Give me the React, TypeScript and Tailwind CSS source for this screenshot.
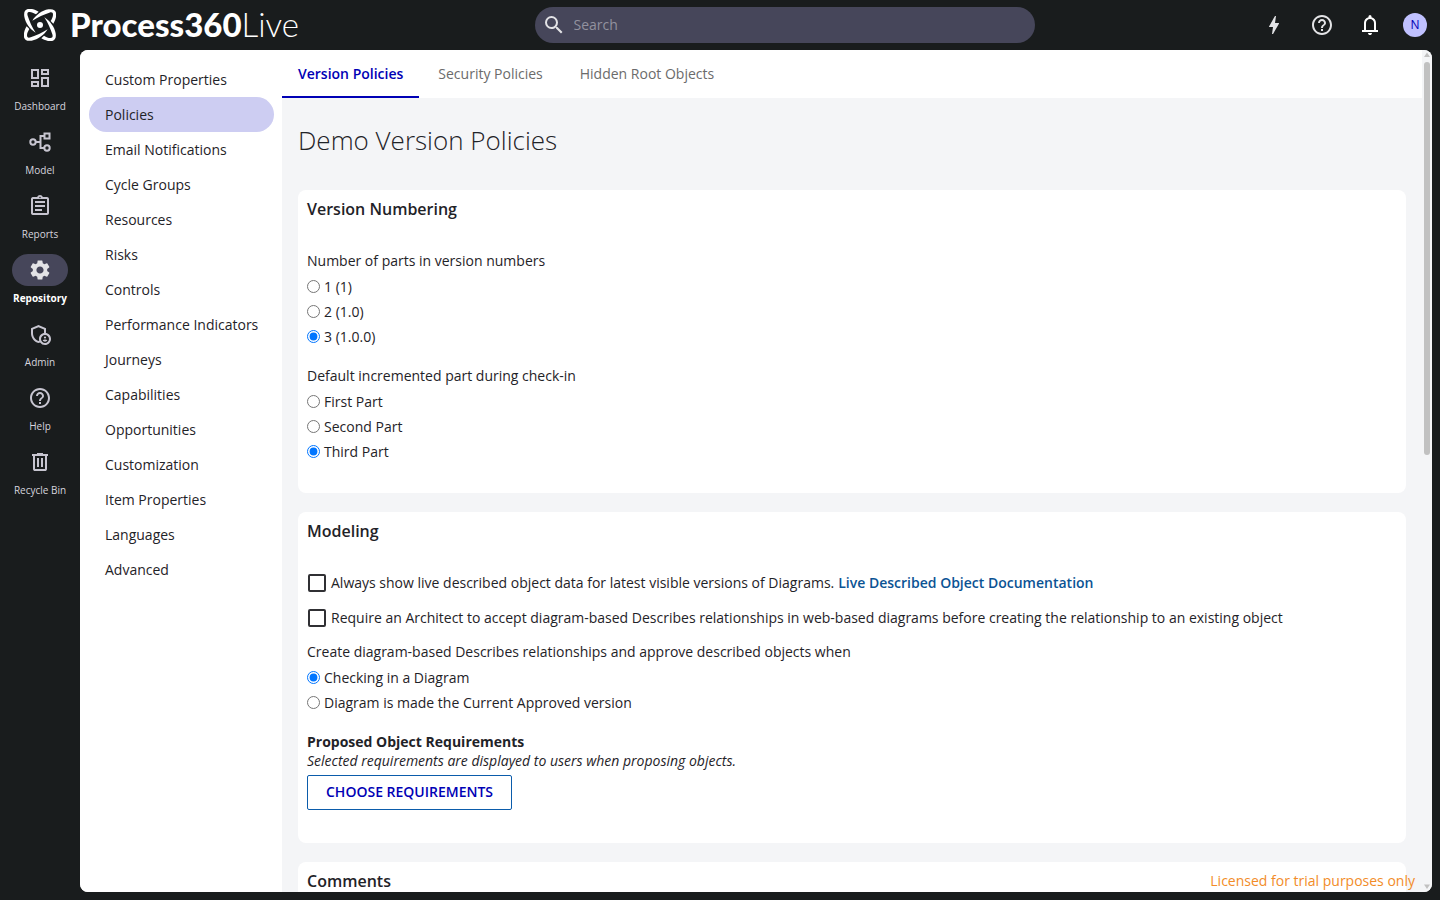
import { useState } from "react";
import type { ReactNode } from "react";
import {
  MdBolt,
  MdHelpOutline,
  MdOutlineAdminPanelSettings,
  MdOutlineAssignment,
  MdOutlineDashboard,
  MdSearch,
  MdSettings,
} from "react-icons/md";

const orbitArm =
  "M25 35C35 19 54 4 73 1C91 -2 99 6 96 24C94 33 91 39 88 44L80 36C84 29 87 23 87 17C87 10 83 9 76 11C60 16 42 24 25 35Z";

function LogoMark() {
  return (
    <svg viewBox="0 0 96 96" className="size-8" fill="#fff" aria-hidden="true">
      <path d={orbitArm} />
      <path d={orbitArm} transform="rotate(90 48 48)" />
      <path d={orbitArm} transform="rotate(180 48 48)" />
      <path d={orbitArm} transform="rotate(270 48 48)" />
      <circle cx="48" cy="48" r="9" />
    </svg>
  );
}

function ModelIcon() {
  return (
    <svg viewBox="0 0 24 24" className="size-6" fill="none" stroke="currentColor" strokeWidth="2" aria-hidden="true">
      <circle cx="5" cy="12" r="2.7" />
      <path d="M8 12h4M17 6h-4.500v12H16" />
      <rect x="16.500" y="3.500" width="5" height="5" />
      <circle cx="19" cy="18" r="2.700" />
    </svg>
  );
}

function TrashIcon() {
  return (
    <svg viewBox="0 -960 960 960" className="size-6" fill="currentColor" aria-hidden="true">
      <path d="M280-120q-33 0-56.500-23.500T200-200v-520h-40v-80h200v-40h240v40h200v80h-40v520q0 33-23.500 56.500T680-120H280Zm400-600H280v520h400v-520ZM360-280h80v-360h-80v360Zm160 0h80v-360h-80v360Z" />
    </svg>
  );
}

function BellIcon() {
  return (
    <svg viewBox="0 -960 960 960" className="size-6" fill="currentColor" aria-hidden="true">
      <path d="M160-200v-80h80v-280q0-83 50-147.500T420-792v-28q0-25 17.500-42.500T480-880q25 0 42.500 17.500T540-820v28q80 20 130 84.500T720-560v280h80v80H160Zm320 120q-33 0-56.500-23.500T400-160h160q0 33-23.500 56.500T480-80ZM320-280h320v-280q0-66-47-113t-113-47q-66 0-113 47t-47 113v280Z" />
    </svg>
  );
}

const railItems: { label: string; icon: ReactNode }[] = [
  { label: "Dashboard", icon: <MdOutlineDashboard className="size-6" /> },
  { label: "Model", icon: <ModelIcon /> },
  { label: "Reports", icon: <MdOutlineAssignment className="size-6" /> },
  { label: "Repository", icon: <MdSettings className="size-6" /> },
  { label: "Admin", icon: <MdOutlineAdminPanelSettings className="size-6" /> },
  { label: "Help", icon: <MdHelpOutline className="size-6" /> },
  { label: "Recycle Bin", icon: <TrashIcon /> },
];

const menuItems = [
  "Custom Properties",
  "Policies",
  "Email Notifications",
  "Cycle Groups",
  "Resources",
  "Risks",
  "Controls",
  "Performance Indicators",
  "Journeys",
  "Capabilities",
  "Opportunities",
  "Customization",
  "Item Properties",
  "Languages",
  "Advanced",
];

const tabs = ["Version Policies", "Security Policies", "Hidden Root Objects"];

function Header() {
  return (
    <header className="flex h-[50px] shrink-0 items-center">
      <a href="#home" className="flex grow basis-[142px] items-center gap-[14px] pl-6 text-white">
        <LogoMark />
        <span className="pb-[2px] font-['Lato',sans-serif] text-[33px] leading-8 font-black">
          Process360<span className="font-light">Live</span>
        </span>
      </a>
      <label className="flex h-9 w-[500px] items-center gap-2 rounded-full bg-[#46465a] pl-[7px]">
        <MdSearch className="size-6 text-[#e3e3e6]" />
        <input
          type="search"
          aria-label="Search"
          placeholder="Search"
          className="flex-1 bg-transparent text-sm text-white outline-none placeholder:text-[#92929f]"
        />
      </label>
      <div className="flex grow basis-0 items-center justify-end gap-6 pr-[13px] text-[#e3e3e6]">
        <button aria-label="Quick actions"><MdBolt className="size-6" /></button>
        <button aria-label="Help"><MdHelpOutline className="size-6" /></button>
        <div className="flex items-center gap-[21px]">
          <button aria-label="Notifications" className="text-white"><BellIcon /></button>
          <button aria-label="Account" className="size-6 rounded-full bg-[#c0c1ff] text-xs text-[#0000b5]">N</button>
        </div>
      </div>
    </header>
  );
}

function Rail() {
  return (
    <nav aria-label="Main" className="flex w-20 shrink-0 flex-col pt-3">
      {railItems.map(({ label, icon }) => {
        const active = label === "Repository";
        return (
          <a
            key={label}
            href="#section"
            className={`flex h-16 flex-col items-center gap-1 text-[10px] leading-4 ${active ? "font-bold text-white" : "font-medium text-[#d6d4de]"}`}
          >
            <span className={`flex h-8 w-14 items-center justify-center rounded-full ${active ? "bg-[#46465a] text-[#e3e3e6]" : "text-[#c7c5d0]"}`}>
              {icon}
            </span>
            {label}
          </a>
        );
      })}
    </nav>
  );
}

function SideMenu() {
  return (
    <nav aria-label="Repository" className="flex w-[202px] shrink-0 flex-col bg-white pt-3 pr-2 pl-[9px]">
      {menuItems.map((item) => (
        <a
          key={item}
          href="#item"
          className={`flex h-[35px] shrink-0 items-center rounded-full pl-4 whitespace-nowrap ${item === "Policies" ? "bg-[#cdcdf2]" : ""}`}
        >
          {item}
        </a>
      ))}
    </nav>
  );
}

function Card({ title, children }: { title: string; children?: ReactNode }) {
  return (
    <section className="rounded-lg bg-white px-[9px] pt-[9px] pb-[26px]">
      <h2 className="text-base leading-5 font-semibold">{title}</h2>
      {children}
    </section>
  );
}

function RadioGroup({ name, legend, options, initial }: { name: string; legend: string; options: string[]; initial: number }) {
  const [value, setValue] = useState(initial);
  return (
    <fieldset>
      <legend className="h-[26px] leading-5">{legend}</legend>
      {options.map((option, index) => (
        <label key={option} className="flex h-[25px] w-fit items-start gap-1 leading-5">
          <input
            type="radio"
            name={name}
            checked={value === index}
            onChange={() => setValue(index)}
            className="mt-[3px] size-[13px] accent-[#0075ff]"
          />
          {option}
        </label>
      ))}
    </fieldset>
  );
}

function CheckRow({ id, label, children }: { id: string; label: string; children?: ReactNode }) {
  return (
    <div className="flex h-[35px] items-center whitespace-nowrap">
      <input id={id} type="checkbox" className="mr-[5px] ml-px size-[18px] shrink-0 appearance-none rounded-xs border-2 border-[#303034] checked:bg-[#0000b5]" />
      <label htmlFor={id}>{label}</label>
      {children}
    </div>
  );
}

function Policies() {
  return (
    <main className="min-h-0 flex-1 overflow-y-auto px-4 pt-6 [scrollbar-width:none]">
      <h1 className="text-[26px] leading-9 font-light">Demo Version Policies</h1>
      <div className="flex flex-col gap-[19px] pt-8">
        <Card title="Version Numbering">
          <div className="flex flex-col gap-[14px] pt-8">
            <RadioGroup
              name="parts"
              legend="Number of parts in version numbers"
              options={["1 (1)", "2 (1.0)", "3 (1.0.0)"]}
              initial={2}
            />
            <RadioGroup
              name="increment"
              legend="Default incremented part during check-in"
              options={["First Part", "Second Part", "Third Part"]}
              initial={2}
            />
          </div>
        </Card>
        <Card title="Modeling">
          <div className="pt-6 pb-[7px]">
            <CheckRow id="live-data" label="Always show live described object data for latest visible versions of Diagrams.">
              <a href="#docs" className="ml-1 font-semibold text-[#0b5394]">Live Described Object Documentation</a>
            </CheckRow>
            <CheckRow
              id="architect"
              label="Require an Architect to accept diagram-based Describes relationships in web-based diagrams before creating the relationship to an existing object"
            />
          </div>
          <RadioGroup
            name="describes"
            legend="Create diagram-based Describes relationships and approve described objects when"
            options={["Checking in a Diagram", "Diagram is made the Current Approved version"]}
            initial={0}
          />
          <h3 className="pt-[14px] leading-5 font-bold">Proposed Object Requirements</h3>
          <p className="leading-[18px] italic">Selected requirements are displayed to users when proposing objects.</p>
          <div className="pt-[5px] pb-[7px]">
            <button className="block h-[35px] rounded-xs border border-[#0b5cab] px-[18px] pb-px font-semibold whitespace-nowrap text-[#0000b5]">
              CHOOSE REQUIREMENTS
            </button>
          </div>
        </Card>
        <Card title="Comments" />
      </div>
    </main>
  );
}

function ScrollTrack() {
  return (
    <div aria-hidden="true" className="flex w-[10px] shrink-0 flex-col items-center bg-[#f4f5f7] text-[#c1c1c1]">
      <svg viewBox="0 0 10 12" className="h-3 w-[10px] shrink-0" fill="currentColor">
        <path d="M5 2.500L8 7H2Z" />
      </svg>
      <div className="flex min-h-0 w-[6px] flex-1 flex-col">
        <div className="h-[48%] rounded-full bg-[#c1c1c1]" />
      </div>
      <svg viewBox="0 0 10 12" className="h-3 w-[10px] shrink-0" fill="currentColor">
        <path d="M5 9L8 4.500H2Z" />
      </svg>
    </div>
  );
}

export default function App() {
  return (
    <div className="flex h-screen flex-col overflow-hidden bg-[#191c1d] font-['Open_Sans',sans-serif] text-sm text-[#1f2328]">
      <Header />
      <div className="flex min-h-0 flex-1">
        <Rail />
        <div className="relative mr-2 mb-2 flex min-w-0 flex-1 overflow-hidden rounded-lg bg-[#f4f5f7]">
          <SideMenu />
          <div className="flex min-w-0 flex-1 flex-col">
            <div role="tablist" className="flex h-12 shrink-0 gap-px bg-white">
              {tabs.map((tab, index) => (
                <button
                  key={tab}
                  role="tab"
                  aria-selected={index === 0}
                  className={`h-12 whitespace-nowrap ${index === 0 ? "border-b-2 border-[#0000b5] px-4 pt-[2px] font-semibold text-[#0000b5]" : "px-[18px] text-[#6b6b6b]"}`}
                >
                  {tab}
                </button>
              ))}
            </div>
            <Policies />
          </div>
          <ScrollTrack />
          <p className="absolute right-[17px] bottom-px leading-5 text-[#f28c28]">Licensed for trial purposes only</p>
        </div>
      </div>
    </div>
  );
}
